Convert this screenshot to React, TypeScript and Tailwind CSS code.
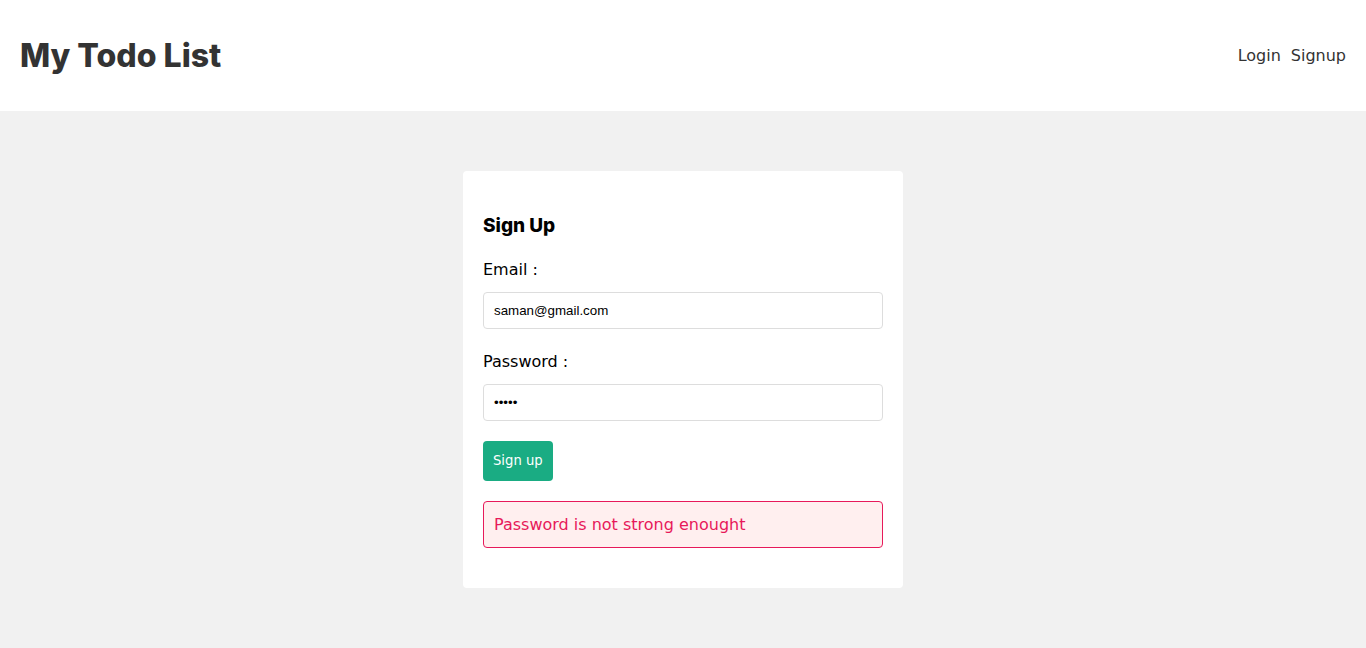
const body = "font-['DejaVu_Sans',sans-serif]";
const inputCls =
  "box-border block h-[37px] w-full rounded-[4px] border border-[#ddd] px-[10px] font-['Liberation_Sans',sans-serif] text-[13.33px] text-black outline-none";

function Header() {
  return (
    <header className="bg-white">
      <div className={`mx-auto flex h-[111px] max-w-[1400px] items-center justify-between px-5 ${body}`}>
        <h1 className="font-['Inter',sans-serif] text-[32px] font-extrabold text-[#333]">My Todo List</h1>
        <nav className="flex items-center gap-[10px] text-[16px] text-[#333]">
          <a href="#">Login</a>
          <a href="#">Signup</a>
        </nav>
      </div>
    </header>
  );
}

function SignupForm() {
  return (
    <form
      className={`mx-auto mt-[60px] w-[440px] rounded-[4px] bg-white p-5 text-[16px] text-black ${body}`}
      onSubmit={(e) => e.preventDefault()}
    >
      <h3 className="mt-[21px] mb-[18px] h-[28px] font-['Inter',sans-serif] text-[19px] font-extrabold leading-[28px]">Sign Up</h3>

      <label className="block leading-[24px]">Email :</label>
      <input type="email" defaultValue="saman@gmail.com" className={`mt-[10px] mb-[21px] ${inputCls}`} />

      <label className="block leading-[24px]">Password :</label>
      <input type="password" defaultValue="12345" className={`mt-[10px] mb-[20px] ${inputCls}`} />

      <button className="block h-[40px] rounded-[4px] bg-[#1aac83] px-[10px] text-[13.2px] text-white">Sign up</button>

      {/* error message */}
      <div className="my-5 h-[47px] rounded-[4px] border border-[#e7195a] bg-[#ffefef] px-[10px] leading-[45px] text-[#e7195a]">
        Password is not strong enought
      </div>
    </form>
  );
}

export default function App() {
  return (
    <div className="min-h-[648px] bg-[#f1f1f1]">
      <Header />
      <SignupForm />
    </div>
  );
}
